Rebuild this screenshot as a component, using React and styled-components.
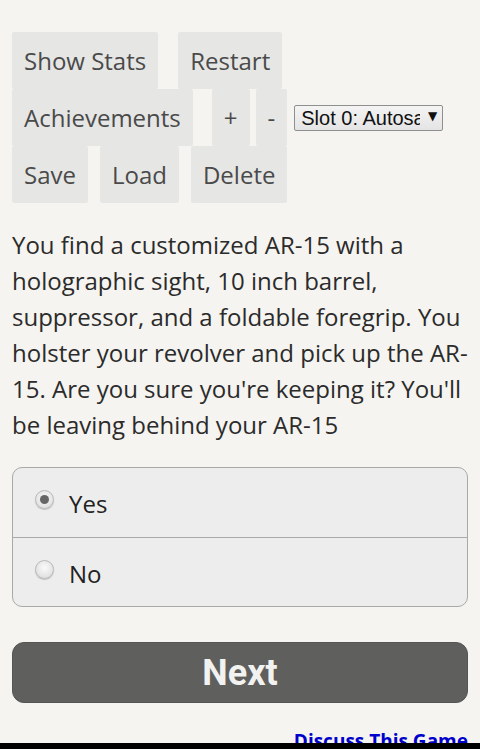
import React, { useState } from "react";
import styled, { createGlobalStyle } from "styled-components";

const GlobalStyle = createGlobalStyle`
  html, body {
    margin: 0;
    padding: 0;
    background: #f5f4f0;
  }
  body {
    font-family: "Open Sans", "DejaVu Sans", sans-serif;
    color: #2b2b2b;
    overflow: hidden;
  }
`;

const Page = styled.div`
  padding: 32px 12px 0 12px;
  height: 749px;
  box-sizing: border-box;
`;

const ButtonRow = styled.div`
  display: flex;
  align-items: center;
  gap: ${(p) => p.$gap || 0}px;
`;

const MenuButton = styled.button`
  height: 57px;
  padding: 0 12px;
  margin-right: ${(p) => p.$mr || 0}px;
  border: none;
  border-radius: 2px;
  background: #e6e6e5;
  color: #4a4a4a;
  font-family: "Open Sans", sans-serif;
  font-size: 24px;
  display: flex;
  align-items: center;
`;

const SelectWrap = styled.div`
  position: relative;
  width: 149px;
  height: 26px;
`;

const SlotSelect = styled.select`
  appearance: none;
  width: 100%;
  height: 100%;
  box-sizing: border-box;
  padding: 0 22px 0 6px;
  border: 1px solid #8f8f8f;
  border-radius: 2px;
  background: linear-gradient(#f4f4f4, #e4e4e4);
  color: #111;
  font-family: "Liberation Sans", Arial, sans-serif;
  font-size: 20px;
`;

const Arrow = styled.span`
  position: absolute;
  right: 6px;
  top: 4px;
  font-size: 12px;
  color: #111;
  pointer-events: none;
  font-family: "DejaVu Sans", sans-serif;
`;

const Story = styled.p`
  margin: 24px 0 24px 0;
  font-size: 24px;
  line-height: 36px;
  color: #2b2b2b;
`;

const ChoiceBox = styled.div`
  border: 1px solid #a9a9a9;
  border-radius: 10px;
  background: #ededed;
  overflow: hidden;
`;

const ChoiceRow = styled.label`
  display: flex;
  align-items: center;
  height: 69px;
  padding-left: 22px;
  padding-top: 2px;
  box-sizing: border-box;
  font-size: 24px;
  color: #222;
  border-top: ${(p) => (p.$first ? "none" : "1px solid #a9a9a9")};
`;

const Radio = styled.span`
  width: 19px;
  height: 19px;
  border-radius: 50%;
  box-sizing: border-box;
  border: 1px solid #b9b9b9;
  background: radial-gradient(circle at 50% 40%, #fafafa, #d8d8d8);
  box-shadow: 0 1px 1px rgba(0, 0, 0, 0.2);
  margin-right: 15px;
  margin-top: -8px;
  display: flex;
  align-items: center;
  justify-content: center;
  &::after {
    content: "";
    width: 9px;
    height: 9px;
    border-radius: 50%;
    background: #666;
    display: ${(p) => (p.$on ? "block" : "none")};
  }
`;

const NextButton = styled.button`
  display: block;
  width: 100%;
  height: 61px;
  margin-top: 35px;
  border: 1px solid #555;
  border-radius: 12px;
  background: #5f5f5d;
  color: #f2f2f0;
  font-family: Roboto, "Liberation Sans", sans-serif;
  font-weight: 700;
  font-size: 36px;
`;

const Footer = styled.div`
  text-align: right;
  margin-top: 25px;
`;

const DiscussLink = styled.a`
  color: #0000cc;
  font-weight: 700;
  font-size: 19px;
  text-decoration: underline;
`;

const NavStrip = styled.div`
  position: fixed;
  left: 0;
  right: 0;
  bottom: 0;
  height: 6px;
  background: #000;
`;

export default function App() {
  const [choice, setChoice] = useState("yes");
  return (
    <>
      <GlobalStyle />
      <Page>
        <ButtonRow $gap={20}>
          <MenuButton>Show Stats</MenuButton>
          <MenuButton>Restart</MenuButton>
        </ButtonRow>
        <ButtonRow>
          <MenuButton $mr={19}>Achievements</MenuButton>
          <MenuButton $mr={6}>+</MenuButton>
          <MenuButton $mr={7}>-</MenuButton>
          <SelectWrap>
            <SlotSelect defaultValue="0">
              <option value="0">Slot 0: Autosave</option>
            </SlotSelect>
            <Arrow>▼</Arrow>
          </SelectWrap>
        </ButtonRow>
        <ButtonRow $gap={12}>
          <MenuButton>Save</MenuButton>
          <MenuButton>Load</MenuButton>
          <MenuButton>Delete</MenuButton>
        </ButtonRow>
        <Story>
          You find a customized AR-15 with a holographic sight, 10 inch barrel,
          suppressor, and a foldable foregrip. You holster your revolver and
          pick up the AR-15. Are you sure you're keeping it? You'll be leaving
          behind your AR-15
        </Story>
        <ChoiceBox>
          <ChoiceRow $first onClick={() => setChoice("yes")}>
            <Radio $on={choice === "yes"} />
            Yes
          </ChoiceRow>
          <ChoiceRow onClick={() => setChoice("no")}>
            <Radio $on={choice === "no"} />
            No
          </ChoiceRow>
        </ChoiceBox>
        <NextButton>Next</NextButton>
        <Footer>
          <DiscussLink href="#">Discuss This Game</DiscussLink>
        </Footer>
      </Page>
      <NavStrip />
    </>
  );
}
